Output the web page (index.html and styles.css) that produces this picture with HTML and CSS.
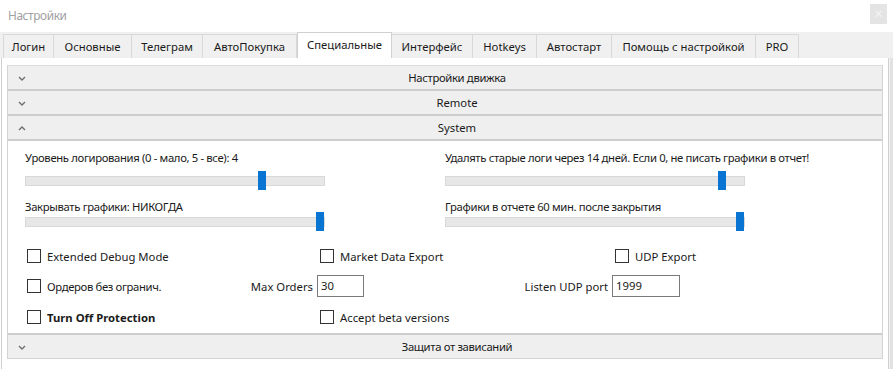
FILE: index.html
```html
<!DOCTYPE html>
<html lang="ru">
<head>
<meta charset="utf-8">
<title>Настройки</title>
<link rel="stylesheet" href="styles.css">
</head>
<body>
<div class="window">
  <div class="titlebar">
    <span class="title ru">Настройки</span>
    <span class="close">×</span>
  </div>
  <div class="tabs">
    <div class="tab t1">Логин</div>
    <div class="tab t2">Основные</div>
    <div class="tab t3">Телеграм</div>
    <div class="tab t4">АвтоПокупка</div>
    <div class="tab t5 active">Специальные</div>
    <div class="tab t6">Интерфейс</div>
    <div class="tab t7">Hotkeys</div>
    <div class="tab t8">Автостарт</div>
    <div class="tab t9">Помощь с настройкой</div>
    <div class="tab t10">PRO</div>
  </div>
  <div class="body">
    <div class="pane">
      <div class="box">
        <div class="hdr">
          <span class="chev"><svg width="8" height="5" viewBox="0 0 8 5"><polyline points="1,1 4,4 7,1" fill="none" stroke="#6e6e6e" stroke-width="1.4"/></svg></span>
          <span class="htext ru">Настройки движка</span>
        </div>
        <div class="hdr">
          <span class="chev"><svg width="8" height="5" viewBox="0 0 8 5"><polyline points="1,1 4,4 7,1" fill="none" stroke="#6e6e6e" stroke-width="1.4"/></svg></span>
          <span class="htext">Remote</span>
        </div>
        <div class="hdr">
          <span class="chev"><svg width="8" height="5" viewBox="0 0 8 5"><polyline points="1,4 4,1 7,4" fill="none" stroke="#6e6e6e" stroke-width="1.4"/></svg></span>
          <span class="htext">System</span>
        </div>
        <div class="sys">
          <div class="sliders">
            <div class="scol">
              <div class="slabel ru">Уровень логирования (0 - мало, 5 - все): 4</div>
              <div class="slider s-first"><div class="track"></div><div class="thumb" style="left:233px"></div></div>
              <div class="slabel l2 ru">Закрывать графики: НИКОГДА</div>
              <div class="slider s-second"><div class="track"></div><div class="thumb" style="left:291px"></div></div>
            </div>
            <div class="scol">
              <div class="slabel ru">Удалять старые логи через 14 дней. Если 0, не писать графики в отчет!</div>
              <div class="slider s-first"><div class="track"></div><div class="thumb" style="left:273px"></div></div>
              <div class="slabel l2 ru">Графики в отчете 60 мин. после закрытия</div>
              <div class="slider s-second"><div class="track"></div><div class="thumb" style="left:291px"></div></div>
            </div>
          </div>
          <div class="row r1">
            <div class="cell c1"><label class="cb"><span class="box-cb"></span>Extended Debug Mode</label></div>
            <div class="cell c2"><label class="cb"><span class="box-cb"></span>Market Data Export</label></div>
            <div class="cell c3"><label class="cb"><span class="box-cb"></span>UDP Export</label></div>
          </div>
          <div class="row r2">
            <div class="cell c1 split"><label class="cb ru"><span class="box-cb"></span>Ордеров без огранич.</label><span class="flabel">Max Orders</span></div>
            <div class="cell c2 split in"><span class="field w-orders">30</span><span class="flabel">Listen UDP port</span></div>
            <div class="cell c3 in"><span class="field w-port">1999</span></div>
          </div>
          <div class="row r3">
            <div class="cell c1"><label class="cb bold"><span class="box-cb"></span>Turn Off Protection</label></div>
            <div class="cell c2"><label class="cb"><span class="box-cb"></span>Accept beta versions</label></div>
            <div class="cell c3"></div>
          </div>
        </div>
        <div class="hdr last">
          <span class="chev"><svg width="8" height="5" viewBox="0 0 8 5"><polyline points="1,1 4,4 7,1" fill="none" stroke="#6e6e6e" stroke-width="1.4"/></svg></span>
          <span class="htext ru">Защита от зависаний</span>
        </div>
      </div>
    </div>
    <div class="edge"></div>
  </div>
</div>
</body>
</html>
```
FILE: styles.css
```css
* { box-sizing: border-box; }
html, body { margin: 0; padding: 0; }
body {
  width: 893px;
  height: 369px;
  overflow: hidden;
  background: #ffffff;
  font-family: "Noto Sans", "Open Sans", sans-serif;
  font-size: 11.3px;
  color: #1a1a1a;
}
.ru { letter-spacing: -0.35px; }
.window { width: 893px; height: 369px; display: flex; flex-direction: column; }
.titlebar {
  height: 32px;
  display: flex;
  align-items: center;
  justify-content: space-between;
  padding: 0 6px 0 8px;
  flex: none;
}
.title { color: #a0a0a0; font-size: 11.8px; margin-top: -2px; }
.close {
  width: 17px; height: 20px;
  background: #e4e4e4;
  color: #f4f4f4;
  font-size: 14px;
  line-height: 20px;
  text-align: center;
  margin-top: -4px;
}
.tabs {
  height: 26px;
  background: #f0f0f0;
  display: flex;
  align-items: flex-end;
  padding-left: 3px;
  flex: none;
}
.tab {
  height: 24px;
  border: 1px solid #d9d9d9;
  border-bottom: none;
  border-left: none;
  display: flex;
  align-items: center;
  justify-content: center;
  color: #1a1a1a;
  white-space: nowrap;
}
.t1 { border-left: 1px solid #d9d9d9; }
.t1 { width: 51px; }
.t2 { width: 78px; }
.t3 { width: 71px; }
.t4 { width: 94px; }
.t5 { width: 95px; }
.t6 { width: 81px; }
.t7 { width: 64px; }
.t8 { width: 75px; }
.t9 { width: 144px; }
.t10 { width: 43px; }
.tab.active {
  height: 26px;
  background: #ffffff;
  border: 1px solid #d0d0d0;
  border-bottom: none;
  padding-bottom: 2px;
}
.body { flex: 1; display: flex; }
.pane {
  width: 888px;
  margin-left: 1px;
  border-left: 1px solid #cfcfcf;
  border-right: 1px solid #cfcfcf;
  padding: 7px 5px 0 5px;
}
.edge { flex: 1; background: #e2e2e2; border-left: 1px solid #f4f4f4; }
.box {
  border: 1px solid #d4d4d4;
  border-top-color: #dcdcdc;
}
.hdr {
  height: 25px;
  background: #efefef;
  border-bottom: 2px solid #cdcdcd;
  display: flex;
  align-items: center;
}
.hdr.last { height: 25px; border-bottom: none; border-top: 2px solid #cdcdcd; }
.chev { width: 24px; display: flex; justify-content: center; padding-left: 3px; padding-top: 1px; }
.htext { flex: 1; text-align: center; }
.sys { padding: 9px 0 5px 17px; }
.sliders { display: grid; grid-template-columns: 420px 1fr; }
.scol { display: flex; flex-direction: column; }
.slabel { height: 16px; line-height: 16px; white-space: nowrap; }
.slabel.l2 { margin-top: 8px; }
.slider { position: relative; width: 300px; height: 20px; }
.s-first { margin-top: 5px; }
.s-second { margin-top: -3px; }
.track {
  position: absolute;
  left: 0; right: 0; top: 5px;
  height: 10px;
  background: #e7e7e7;
  border: 1px solid #d8d8d8;
}
.thumb {
  position: absolute;
  top: 0;
  width: 8px;
  height: 19px;
  background: #0a74d2;
}
.row { display: grid; grid-template-columns: 290px 295px 1fr; height: 22px; padding-left: 2px; }
.r1 { margin-top: 13px; }
.r2 { margin-top: 8px; }
.r3 { margin-top: 9px; }
.cell { display: flex; align-items: center; }
.c2 { padding-left: 3px; }
.c3 { padding-left: 3px; }
.cell.in { padding-left: 0; }
.split { justify-content: space-between; }
.split .flabel { margin-right: 4px; }
.cb { display: flex; align-items: center; white-space: nowrap; }
.cb.bold { font-weight: bold; }
.box-cb {
  width: 14px; height: 14px;
  border: 1px solid #333333;
  background: #fff;
  margin-right: 6px;
}
.field {
  height: 22px;
  border: 1px solid #7a7a7a;
  padding-left: 3px;
  line-height: 20px;
  background: #fff;
}
.w-orders { width: 47px; }
.w-port { width: 68px; }
```
